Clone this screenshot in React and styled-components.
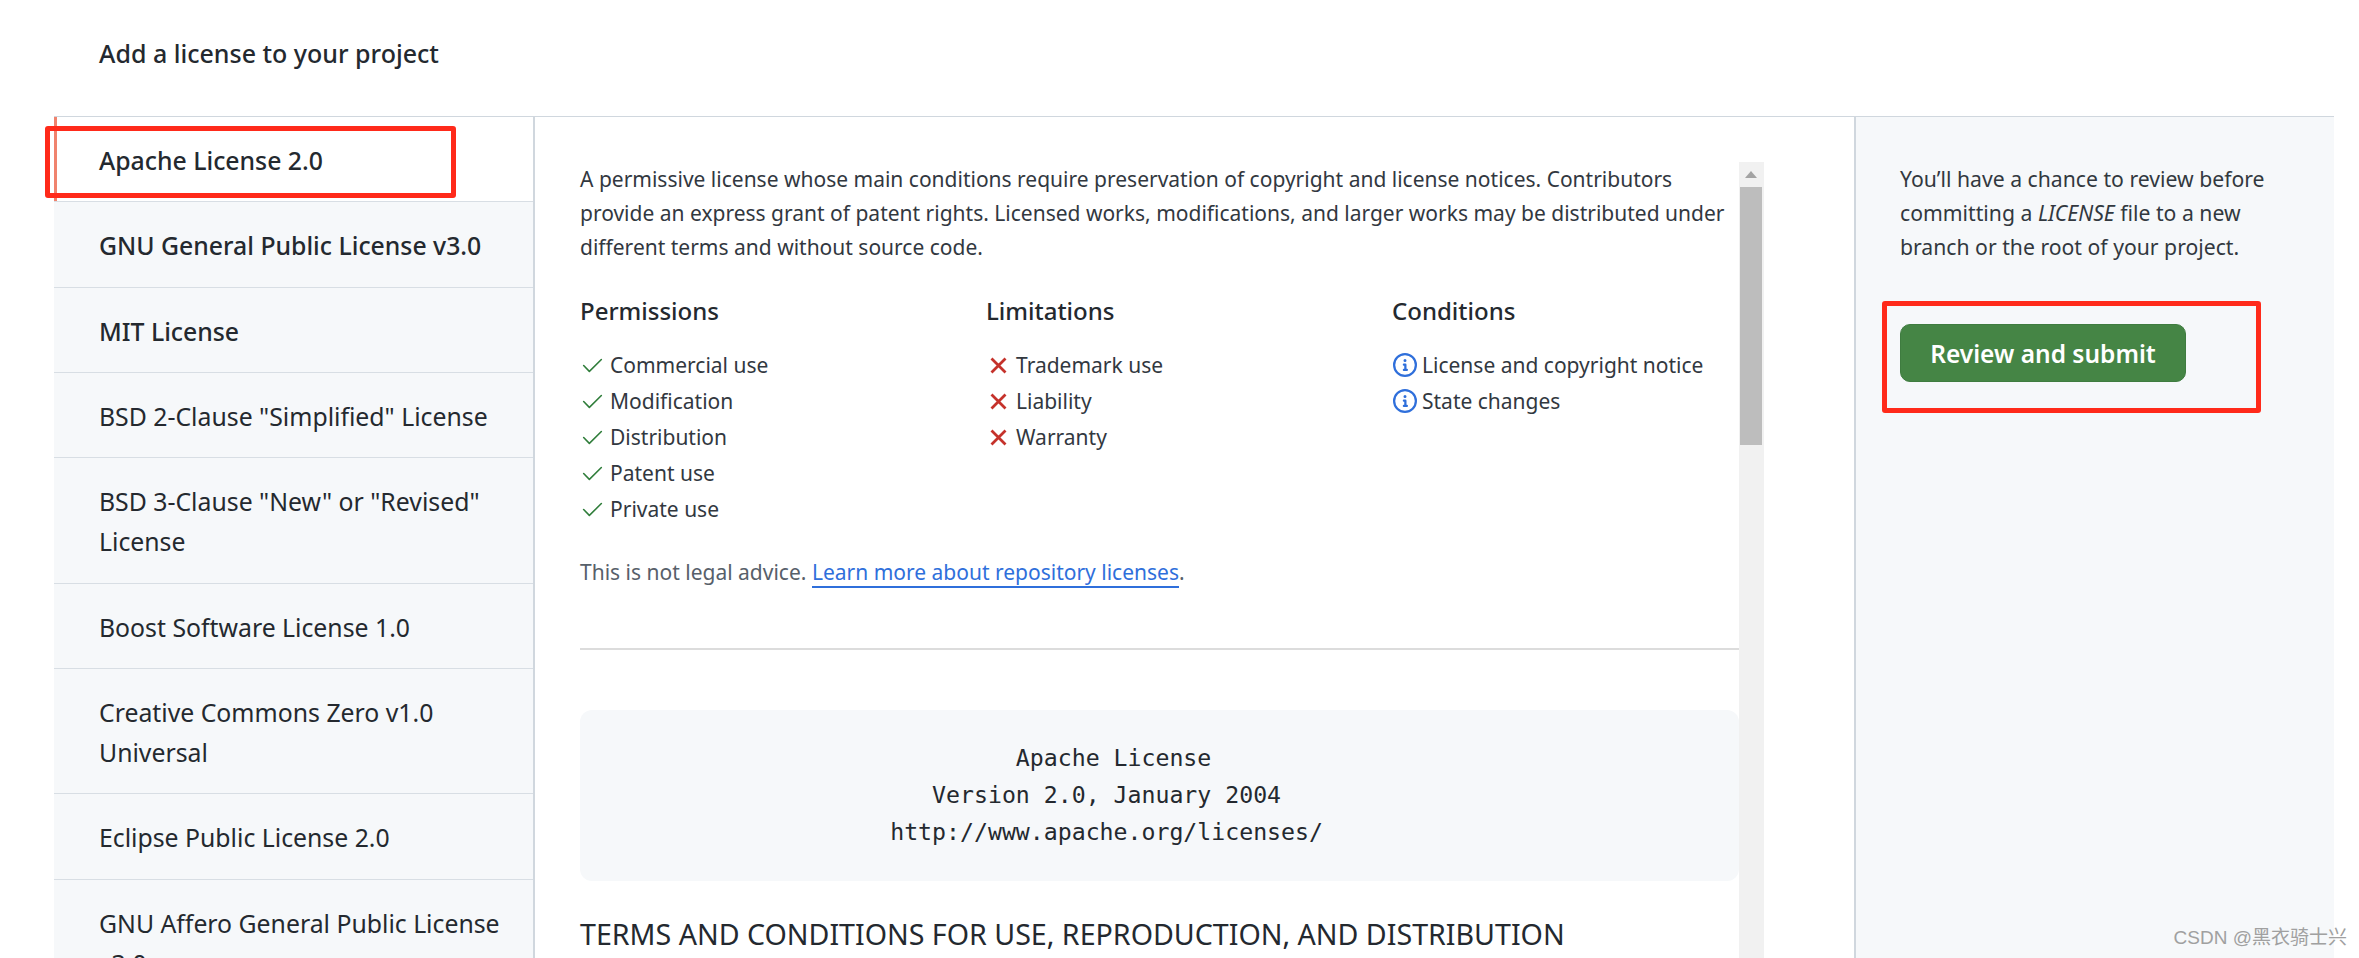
import React from 'react'
import styled, { createGlobalStyle } from 'styled-components'
import { GoCheck } from 'react-icons/go'

const licenses = [
  { name: 'Apache License 2.0', strong: true, active: true },
  { name: 'GNU General Public License v3.0', strong: true },
  { name: 'MIT License', strong: true },
  { name: 'BSD 2-Clause "Simplified" License' },
  { name: 'BSD 3-Clause "New" or "Revised" License' },
  { name: 'Boost Software License 1.0' },
  { name: 'Creative Commons Zero v1.0 Universal' },
  { name: 'Eclipse Public License 2.0' },
  { name: 'GNU Affero General Public License v3.0' },
]

const columns = [
  {
    title: 'Permissions',
    kind: 'check',
    items: ['Commercial use', 'Modification', 'Distribution', 'Patent use', 'Private use'],
  },
  {
    title: 'Limitations',
    kind: 'cross',
    items: ['Trademark use', 'Liability', 'Warranty'],
  },
  {
    title: 'Conditions',
    kind: 'info',
    items: ['License and copyright notice', 'State changes'],
  },
]

const licenseHead = `                             Apache License
                       Version 2.0, January 2004
                    http://www.apache.org/licenses/`

const CrossIcon = () => (
  <svg width="17" height="17" viewBox="0 0 17 17" fill="none" stroke="currentColor" strokeWidth="2.8">
    <path d="M1.5 1.5l14 14M15.5 1.5l-14 14" />
  </svg>
)

const InfoIcon = () => (
  <svg width="24" height="24" viewBox="0 0 16 16" fill="currentColor">
    <path d="M0 8a8 8 0 1 1 16 0A8 8 0 0 1 0 8Zm8-6.5a6.5 6.5 0 1 0 0 13 6.5 6.5 0 0 0 0-13ZM6.5 7.75A.75.75 0 0 1 7.25 7h1a.75.75 0 0 1 .75.75v2.75h.25a.75.75 0 0 1 0 1.5h-2a.75.75 0 0 1 0-1.5h.25v-2h-.25a.75.75 0 0 1-.75-.75ZM8 6a1 1 0 1 1 0-2 1 1 0 0 1 0 2Z" />
  </svg>
)

const App = () => {
  return (
    <Page>
      <GlobalStyle />
      <Header>Add a license to your project</Header>
      <Panel>
        <Sidebar>
          {licenses.map(({ name, strong, active }) => (
            <LicenseRow key={name} $strong={strong} $active={active}>
              {name}
            </LicenseRow>
          ))}
        </Sidebar>
        <Main>
          <Body>
            <Summary>
              A permissive license whose main conditions require preservation of copyright and license notices. Contributors
              provide an express grant of patent rights. Licensed works, modifications, and larger works may be distributed under
              different terms and without source code.
            </Summary>
            <Columns>
              {columns.map(({ title, kind, items }) => (
                <div key={title}>
                  <ColumnTitle>{title}</ColumnTitle>
                  <RuleList>
                    {items.map((item) => (
                      <Rule key={item}>
                        <RuleIcon $kind={kind}>
                          {kind === 'check' && <GoCheck size={25} />}
                          {kind === 'cross' && <CrossIcon />}
                          {kind === 'info' && <InfoIcon />}
                        </RuleIcon>
                        {item}
                      </Rule>
                    ))}
                  </RuleList>
                </div>
              ))}
            </Columns>
            <Legal>
              This is not legal advice. <LegalLink>Learn more about repository licenses</LegalLink>.
            </Legal>
            <Divider />
            <CodeBlock>{licenseHead}</CodeBlock>
            <Terms>TERMS AND CONDITIONS FOR USE, REPRODUCTION, AND DISTRIBUTION</Terms>
          </Body>
          <Track>
            <TrackArrow />
            <Thumb />
          </Track>
        </Main>
        <Aside>
          <AsideText>
            You’ll have a chance to review before committing a <em>LICENSE</em> file to a new branch or the root of your project.
          </AsideText>
          <SubmitButton>Review and submit</SubmitButton>
        </Aside>
      </Panel>
      <RedBox $left={45} $top={126} $width={411} $height={72} />
      <RedBox $left={1882} $top={301} $width={379} $height={112} />
      <Watermark>CSDN @黑衣骑士兴</Watermark>
    </Page>
  )
}

const GlobalStyle = createGlobalStyle`
  html, body {
    margin: 0;
    height: 100%;
    background: #fff;
    overflow: hidden;
  }
  * {
    box-sizing: border-box;
  }
`

const Page = styled.div`
  position: relative;
  width: 2359px;
  height: 958px;
  overflow: hidden;
  display: flex;
  flex-direction: column;
  font-family: "Noto Sans", "Open Sans", sans-serif;
  font-size: 21px;
  color: #24292f;
`

const Header = styled.div`
  height: 116px;
  padding: 34px 0 0 99px;
  line-height: 38px;
  font-size: 25px;
  font-weight: 500;
  color: #24292f;
`

const Panel = styled.div`
  flex: 1;
  min-height: 0;
  width: 2280px;
  margin-left: 54px;
  border-top: 1px solid #d0d7de;
  display: grid;
  grid-template-columns: 481px 1319px 480px;
`

const Sidebar = styled.div`
  border-right: 2px solid #d0d7de;
  background: #f6f8fa;
  overflow: hidden;
`

const LicenseRow = styled.div`
  padding: 23px 30px 21.33px 45px;
  line-height: 40px;
  border-bottom: 1px solid #d8dee4;
  font-size: 24.8px;
  font-weight: ${(p) => (p.$strong ? 500 : 400)};
  background: ${(p) => (p.$active ? '#fff' : 'transparent')};
  box-shadow: ${(p) => (p.$active ? 'inset 3px 0 0 #f0836e' : 'none')};
`

const Main = styled.div`
  display: flex;
  align-items: stretch;
  padding: 45px 90px 0 45px;
  overflow: hidden;
`

const Body = styled.div`
  width: 1159px;
  flex-shrink: 0;
`

const Summary = styled.p`
  margin: 0;
  line-height: 34px;
  color: #32383f;
`

const Columns = styled.div`
  display: grid;
  grid-template-columns: repeat(3, 406px);
  margin-top: 29px;
`

const ColumnTitle = styled.div`
  line-height: 36px;
  font-size: 24px;
  font-weight: 500;
  color: #24292f;
`

const RuleList = styled.ul`
  list-style: none;
  margin: 18px 0 0;
  padding: 0;
`

const Rule = styled.li`
  display: flex;
  align-items: center;
  height: 36px;
  color: #32383f;
`

const ruleColors = { check: '#2f7d3a', cross: '#c5322b', info: '#2f6fdb' }

const RuleIcon = styled.span`
  width: 25px;
  margin-right: 5px;
  flex-shrink: 0;
  display: flex;
  align-items: center;
  justify-content: center;
  color: ${(p) => ruleColors[p.$kind]};
`

const Legal = styled.p`
  margin: 28px 0 0;
  line-height: 34px;
  color: #57606a;
`

const LegalLink = styled.span`
  color: #2f6fdb;
  border-bottom: 2px solid #2f6fdb;
`

const Divider = styled.hr`
  margin: 59px 0 0;
  border: 0;
  border-top: 2px solid #dcdcdc;
`

const CodeBlock = styled.pre`
  margin: 60px 0 0;
  height: 171px;
  padding: 29px 0 0 31px;
  background: #f6f8fa;
  border-radius: 12px;
  font-family: "DejaVu Sans Mono", "Liberation Mono", monospace;
  font-size: 23.2px;
  line-height: 37px;
  color: #24292f;
`

const Terms = styled.div`
  margin-top: 31px;
  line-height: 44px;
  font-size: 28.6px;
  color: #24292f;
  white-space: nowrap;
`

const Track = styled.div`
  width: 25px;
  flex-shrink: 0;
  padding: 0 2px 0 1px;
  background: #f1f1f1;
  margin-bottom: -10px;
`

const TrackArrow = styled.div`
  width: 0;
  height: 0;
  margin: 9px auto 9px;
  border-left: 6px solid transparent;
  border-right: 6px solid transparent;
  border-bottom: 7px solid #a3a3a3;
`

const Thumb = styled.div`
  height: 258px;
  background: #bdbdbd;
`

const Aside = styled.div`
  border-left: 2px solid #d0d7de;
  background: #f6f8fa;
  padding: 45px 40px 0 44px;
`

const AsideText = styled.p`
  margin: 0;
  line-height: 34px;
  font-size: 21.2px;
  color: #32383f;
`

const SubmitButton = styled.button`
  display: block;
  margin-top: 60px;
  width: 286px;
  height: 58px;
  padding: 0;
  border: 1px solid #3f7c40;
  border-radius: 10px;
  background: #458545;
  color: #fff;
  font-family: inherit;
  font-size: 24.5px;
  font-weight: 600;
`

const RedBox = styled.div`
  position: absolute;
  left: ${(p) => p.$left}px;
  top: ${(p) => p.$top}px;
  width: ${(p) => p.$width}px;
  height: ${(p) => p.$height}px;
  border: 5px solid #ff2a1a;
  border-radius: 3px;
`

const Watermark = styled.div`
  position: absolute;
  right: 12px;
  top: 925px;
  line-height: 26px;
  font-family: "Liberation Sans", "Noto Sans CJK SC", sans-serif;
  font-size: 19px;
  color: #a0a0a0;
`

export default App
